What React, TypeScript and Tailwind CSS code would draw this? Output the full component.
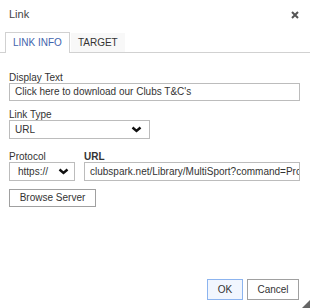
import React from "react";

const Chevron = () => (
  <svg width="11" height="7" viewBox="0 0 11 7" className="shrink-0">
    <polyline points="1.5,1.5 5.5,5 9.5,1.5" fill="none" stroke="#111" strokeWidth="2.4" />
  </svg>
);

const App = () => {
  return (
    <div
      className="relative flex h-[308px] w-[310px] flex-col bg-white text-[10px] text-[#333]"
      style={{ fontFamily: '"Liberation Sans", Arial, sans-serif' }}
    >
      {/* Title bar */}
      <div className="flex h-[32px] items-start justify-between pl-[9px] pr-[11px] pt-[8px]">
        <span className="text-[11px] leading-[13px] text-[#444]">Link</span>
        <svg width="8" height="8" viewBox="0 0 8 8" className="mt-[3px]">
          <path d="M1 1 L7 7 M7 1 L1 7" stroke="#555" strokeWidth="2" />
        </svg>
      </div>

      {/* Tabs */}
      <div className="flex h-[21px] items-end gap-[1px] border-b border-[#d1d1d1] pl-[5px]">
        <div className="-mb-px flex h-[21px] items-center border border-b-0 border-[#d1d1d1] bg-white px-[7px] leading-[12px] text-[#3f64ad]">
          LINK INFO
        </div>
        <div className="flex h-[19px] items-center bg-[#f8f8f8] px-[7px] leading-[12px] text-[#333]">
          TARGET
        </div>
      </div>

      {/* Form */}
      <div className="flex flex-col pl-[9px] pr-[10px]">
        <label className="mt-[20px] h-[10px] leading-[10px]">Display Text</label>
        <div className="flex h-[18px] items-center border border-[#bcbcbc] px-[5px] leading-[12px]">
          Click here to download our Clubs T&amp;C's
        </div>

        <label className="mt-[9px] h-[10px] leading-[10px]">Link Type</label>
        <div className="flex h-[19px] w-[141px] items-center justify-between border border-[#bcbcbc] pl-[5px] pr-[7px] leading-[12px]">
          <span>URL</span>
          <Chevron />
        </div>

        <div className="mt-[13px] flex gap-[9px]">
          <div className="flex w-[66px] flex-col">
            <label className="h-[10px] leading-[10px]">Protocol</label>
            <div className="flex h-[19px] items-center justify-between border border-[#bcbcbc] pl-[8px] pr-[5px] leading-[12px]">
              <span>https://</span>
              <Chevron />
            </div>
          </div>
          <div className="flex min-w-0 flex-1 flex-col">
            <label className="h-[10px] font-bold leading-[10px]">URL</label>
            <div className="flex h-[19px] items-center overflow-hidden whitespace-nowrap border border-[#bcbcbc] px-[5px] leading-[12px]">
              clubspark.net/Library/MultiSport?command=Proxy
            </div>
          </div>
        </div>

        <button className="mt-[8px] flex h-[18px] w-[87px] items-center justify-center border border-[#a0a0a0] bg-white leading-[12px] text-[#333]">
          Browse Server
        </button>
      </div>

      {/* Footer buttons */}
      <div className="mt-auto flex justify-end gap-[4px] pb-[8px] pr-[11px]">
        <button className="flex h-[21px] w-[36px] items-center justify-center border border-[#8cb4ef] bg-[#f1f6fe] leading-[12px] text-[#333]">
          OK
        </button>
        <button className="flex h-[21px] w-[52px] items-center justify-center border border-[#a0a0a0] bg-white leading-[12px] text-[#333]">
          Cancel
        </button>
      </div>

      {/* Resize grip */}
      <svg width="8" height="8" viewBox="0 0 8 8" className="absolute bottom-0 right-0">
        <polygon points="8,0 8,8 0,8" fill="#666" />
      </svg>
    </div>
  );
};

export default App;
